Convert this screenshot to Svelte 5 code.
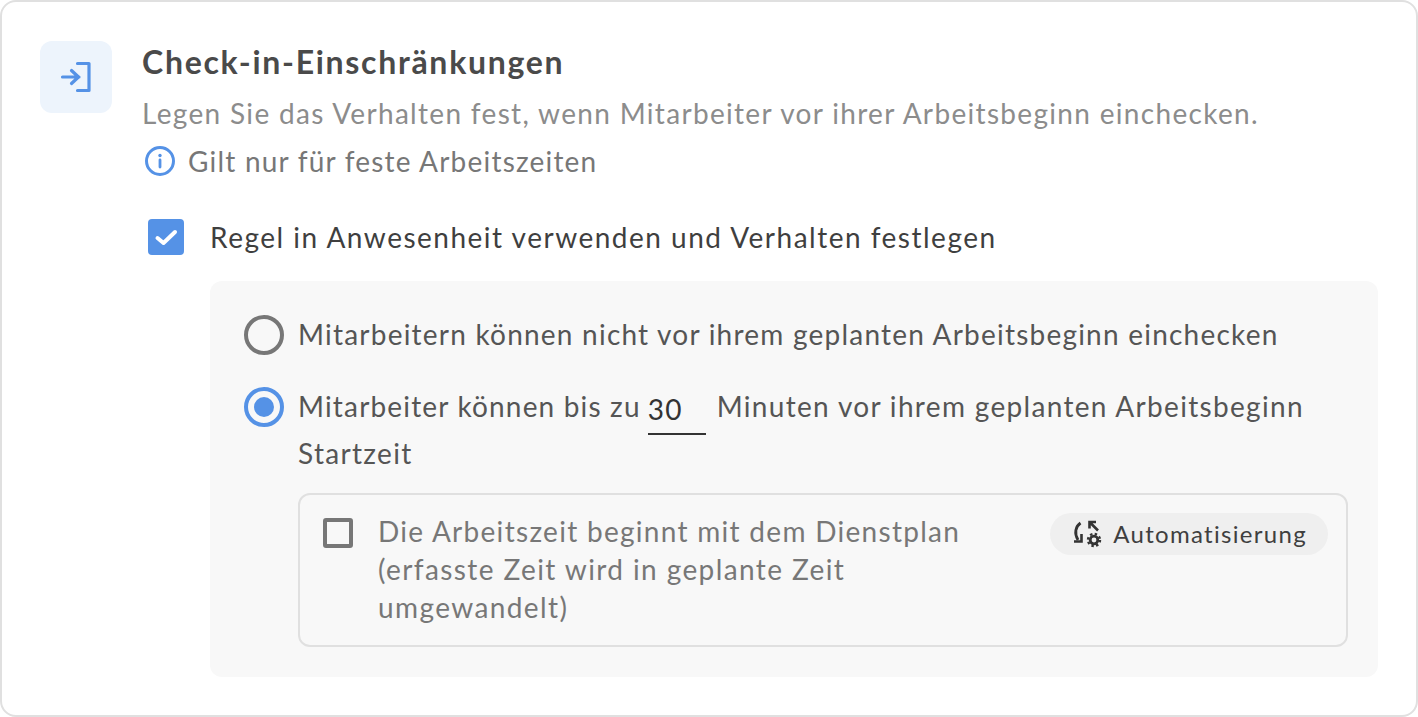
<script>
  const minutes = 30;
</script>

<div class="card">
  <div class="tile">
    <svg width="36" height="36" viewBox="0 0 36 36" fill="none" stroke="#5592e6" stroke-width="3.2" stroke-linecap="round" stroke-linejoin="round">
      <path d="M4.5 18H21M13.5 11.5L20.5 18L13.5 24.5" />
      <path d="M19.5 4.5H31V31.5H19.5" />
    </svg>
  </div>
  <div class="body">
    <h1>Check-in-Einschränkungen</h1>
    <p class="desc">Legen Sie das Verhalten fest, wenn Mitarbeiter vor ihrer Arbeitsbeginn einchecken.</p>
    <div class="note">
      <svg width="32" height="32" viewBox="0 0 32 32" fill="none">
        <circle cx="16" cy="16" r="13.5" stroke="#5592e6" stroke-width="3" />
        <circle cx="16" cy="10.5" r="1.7" fill="#5592e6" />
        <path d="M16 15V22" stroke="#5592e6" stroke-width="2.8" stroke-linecap="round" />
      </svg>
      <span>Gilt nur für feste Arbeitszeiten</span>
    </div>
    <div class="rule">
      <span class="check">
        <svg width="24" height="24" viewBox="0 0 24 24" fill="none" stroke="#fff" stroke-width="4" stroke-linecap="round" stroke-linejoin="round">
          <path d="M3.5 13L9.5 18L21 7" />
        </svg>
      </span>
      <span class="rule-label">Regel in Anwesenheit verwenden und Verhalten festlegen</span>
    </div>
    <div class="panel">
      <div class="option">
        <span class="radio"></span>
        <span class="first-text">Mitarbeitern können nicht vor ihrem geplanten Arbeitsbeginn einchecken</span>
      </div>
      <div class="option second">
        <span class="radio on"><span class="dot"></span></span>
        <div class="long">
          <span class="lead">Mitarbeiter können bis zu</span><span class="field">{minutes}</span><span class="tail">Minuten vor ihrem geplanten Arbeitsbeginn Startzeit</span>
        </div>
      </div>
      <div class="sub">
        <span class="box"></span>
        <div class="sub-text">Die Arbeitszeit beginnt mit dem Dienstplan <span class="wide">(erfasste Zeit wird in geplante Zeit umgewandelt)</span></div>
        <div class="pill">
          <svg width="30" height="28" viewBox="0 0 30 28" fill="none">
            <path d="M8.5 3C3.5 6.5 2 13 6 20" stroke="#333" stroke-width="2.8" />
            <path d="M2 21.5H9.5V14" stroke="#333" stroke-width="2.6" />
            <path d="M26 10.5L18 2.5M17.5 8.5V2H24" stroke="#333" stroke-width="2.6" />
            <circle cx="22" cy="20" r="3.8" stroke="#333" stroke-width="2.8" />
            <circle cx="22" cy="20" r="6" stroke="#333" stroke-width="2.4" stroke-dasharray="2.4 2.31" />
          </svg>
          <span>Automatisierung</span>
        </div>
      </div>
    </div>
  </div>
</div>

<style>
  :global(body) {
    margin: 0;
    background: #fff;
  }
  .card {
    box-sizing: border-box;
    width: 1418px;
    height: 717px;
    border: 2px solid #e0e0e0;
    border-radius: 16px;
    padding: 39px 38px 38px;
    display: flex;
    gap: 30px;
    font-family: "Lato", "Noto Sans", sans-serif;
    background: #fff;
    overflow: hidden;
  }
  .tile {
    width: 72px;
    height: 72px;
    flex: none;
    border-radius: 12px;
    background: #edf4fc;
    display: flex;
    align-items: center;
    justify-content: center;
  }
  .body {
    flex: 1;
    min-width: 0;
  }
  h1 {
    margin: 0;
    font-size: 32px;
    line-height: 42px;
    font-weight: 700;
    color: #4a4a4a;
    letter-spacing: 1.71px;
  }
  .desc {
    margin: 10px 0 0;
    font-size: 28px;
    line-height: 40px;
    color: #8c8c8c;
    letter-spacing: 1.32px;
  }
  .note {
    margin: 8px 0 0 2px;
    display: flex;
    align-items: center;
    gap: 12px;
    font-size: 28px;
    line-height: 40px;
    color: #777;
    letter-spacing: 1.2px;
  }
  .rule {
    margin-top: 36px;
    margin-left: 6px;
    display: flex;
    align-items: center;
    gap: 26px;
    height: 40px;
  }
  .check {
    width: 36px;
    height: 36px;
    border-radius: 4px;
    background: #5592e6;
    display: flex;
    align-items: center;
    justify-content: center;
  }
  .rule-label {
    font-size: 28px;
    color: #3f3f3f;
    letter-spacing: 1.5px;
  }
  .panel {
    margin: 24px 0 0 68px;
    background: #f8f8f8;
    border-radius: 12px;
    padding: 34px 30px 30px 34px;
    font-size: 28px;
    color: #555;
    letter-spacing: 1.22px;
  }
  .option {
    display: flex;
    align-items: flex-start;
    gap: 14px;
    line-height: 40px;
  }
  .first-text {
    margin-top: -1px;
  }
  .second {
    margin-top: 32px;
  }
  .radio {
    box-sizing: border-box;
    flex: none;
    width: 40px;
    height: 40px;
    border: 4.5px solid #777;
    border-radius: 50%;
    display: flex;
    align-items: center;
    justify-content: center;
  }
  .radio.on {
    border-color: #5592e6;
  }
  .dot {
    width: 20px;
    height: 20px;
    border-radius: 50%;
    background: #5592e6;
  }
  .long {
    line-height: 47px;
    margin-top: -4px;
  }
  .lead {
    letter-spacing: 1.17px;
  }
  .tail {
    letter-spacing: 1.32px;
  }
  .field {
    display: inline-block;
    box-sizing: border-box;
    width: 58px;
    margin: 0 11px -6px 7px;
    padding-bottom: 7px;
    border-bottom: 2px solid #333;
    color: #333;
    line-height: 34px;
    vertical-align: -3px;
  }
  .sub {
    box-sizing: border-box;
    margin: 16px 0 0 54px;
    height: 154px;
    border: 2px solid #e0e0e0;
    border-radius: 12px;
    padding: 18px 18px 0 23px;
    display: flex;
    align-items: flex-start;
    color: #777;
    line-height: 38px;
    letter-spacing: 1.29px;
  }
  .box {
    box-sizing: border-box;
    flex: none;
    width: 30px;
    height: 30px;
    margin-top: 5px;
    border: 4px solid #777;
    border-radius: 3px;
  }
  .sub-text {
    width: 620px;
    margin: -1px 0 0 25px;
    flex: none;
  }
  .wide {
    letter-spacing: 1.4px;
  }
  .pill {
    margin-left: auto;
    height: 42px;
    border-radius: 21px;
    background: #efefef;
    display: flex;
    align-items: center;
    gap: 11px;
    padding: 0 21px 0 22px;
    font-size: 24px;
    color: #3f3f3f;
    letter-spacing: 1.3px;
    line-height: 42px;
  }
</style>
